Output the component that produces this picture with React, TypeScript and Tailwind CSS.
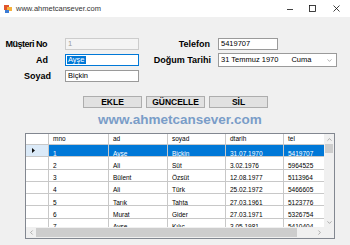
import { ChevronDown, ChevronLeft, ChevronRight, ChevronUp } from "lucide-react";

const rows = [
  { mno: "1", ad: "Ayşe", soyad: "Biçkin", dtarih: "31.07.1970", tel: "5419707" },
  { mno: "2", ad: "Ali", soyad: "Süt", dtarih: "3.02.1976", tel: "5964525" },
  { mno: "3", ad: "Bülent", soyad: "Özsüt", dtarih: "12.08.1977", tel: "5113964" },
  { mno: "4", ad: "Ali", soyad: "Türk", dtarih: "25.02.1972", tel: "5466605" },
  { mno: "5", ad: "Tarık", soyad: "Tahta", dtarih: "27.03.1961", tel: "5123776" },
  { mno: "6", ad: "Murat", soyad: "Gider", dtarih: "27.03.1971", tel: "5326754" },
  { mno: "7", ad: "Ayşe", soyad: "Kılıç", dtarih: "3.05.1981", tel: "5410404" },
];

const cols = ["mno", "ad", "soyad", "dtarih", "tel"] as const;

function AppIcon() {
  return (
    <svg width="8" height="8" viewBox="0 0 8 8">
      <rect x="0" y="0" width="5" height="5" fill="#e0542c" />
      <rect x="3" y="2" width="5" height="4" fill="#f6b23c" />
      <rect x="1" y="5" width="4" height="3" fill="#3b7bd4" />
    </svg>
  );
}

function Label({ w, text, tight }: { w: string; text: string; tight?: boolean }) {
  return (
    <div className={`${w} text-right font-bold text-[9px] leading-none text-black ${tight ? "tracking-[-0.5px]" : ""}`}>
      {text}
    </div>
  );
}

export default function App() {
  return (
    <div className="w-[350px] h-[245px] bg-[#f0f0f0] overflow-hidden flex flex-col font-['Liberation_Sans',Arial,sans-serif]">
      {/* title bar */}
      <div className="h-[17px] bg-white flex items-center pl-[4px] shrink-0">
        <AppIcon />
        <span className="ml-[4px] text-[7.5px] text-[#333] leading-none">www.ahmetcansever.com</span>
        <div className="ml-auto flex h-full">
          <div className="w-[22px] flex items-center justify-center">
            <svg width="6" height="6" viewBox="0 0 6 6">
              <line x1="0" y1="3.5" x2="6" y2="3.5" stroke="#111" strokeWidth="0.8" />
            </svg>
          </div>
          <div className="w-[22px] flex items-center justify-center">
            <svg width="7" height="7" viewBox="0 0 7 7">
              <rect x="0.5" y="0.5" width="6" height="6" fill="none" stroke="#111" strokeWidth="0.8" />
            </svg>
          </div>
          <div className="w-[27px] flex items-center justify-center">
            <svg width="7" height="7" viewBox="0 0 7 7">
              <path d="M0.5 0.5 L6.5 6.5 M6.5 0.5 L0.5 6.5" stroke="#111" strokeWidth="0.8" />
            </svg>
          </div>
        </div>
      </div>

      {/* form fields */}
      <div className="mt-[19px] flex flex-col">
        <div className="h-[16px] flex items-center">
          <Label w="w-[47px]" text="Müşteri No" tight />
          <div className="ml-[18px] w-[74px] h-[12px] border border-[#cccccc] bg-[#f4f4f4] flex items-center pl-[2px] text-[7.5px] text-[#9a9a9a]">
            1
          </div>
          <Label w="w-[71px]" text="Telefon" />
          <div className="ml-[8px] w-[60px] h-[12px] border border-[#9a9a9a] bg-white flex items-center pl-[2px] text-[7.5px] text-black">
            5419707
          </div>
        </div>
        <div className="h-[16px] flex items-center">
          <Label w="w-[48px]" text="Ad" />
          <div className="ml-[17px] w-[74px] h-[12px] border border-[#0078d7] bg-white flex items-center pl-[1px] text-[7.5px]">
            <span className="bg-[#0078d7] text-white px-[1px] leading-[8px]">Ayşe</span>
          </div>
          <Label w="w-[72px]" text="Doğum Tarihi" />
          <div className="ml-[7px] w-[119px] h-[14px] border border-[#9a9a9a] bg-white flex items-center pl-[2px] text-[7.5px] text-black">
            <span>31 Temmuz 1970</span>
            <span className="ml-[13px]">Cuma</span>
            <div className="ml-auto w-[14px] flex items-center justify-center">
              <ChevronDown size={7} strokeWidth={1.5} color="#555" />
            </div>
          </div>
        </div>
        <div className="h-[16px] flex items-center">
          <Label w="w-[51px]" text="Soyad" />
          <div className="ml-[14px] w-[74px] h-[12px] border border-[#9a9a9a] bg-white flex items-center pl-[2px] text-[7.5px] text-black">
            Biçkin
          </div>
        </div>
      </div>

      {/* buttons */}
      <div className="mt-[12px] pl-[83px] flex gap-[4px]">
        {["EKLE", "GÜNCELLE", "SİL"].map((b) => (
          <button
            key={b}
            className="w-[59px] h-[12px] bg-[#e1e1e1] border border-[#adadad] flex items-center justify-center text-[8.5px] font-bold leading-none text-black"
          >
            {b}
          </button>
        ))}
      </div>

      <div className="mt-[4px] pl-[98px] h-[16px] text-[13.5px] leading-[16px] font-bold text-[#7a9dc8]">
        www.ahmetcansever.com
      </div>

      {/* data grid */}
      <div className="mt-[5px] ml-[25px] w-[310px] h-[106px] border border-[#828790] bg-white flex flex-col">
        <div className="flex h-[93px]">
          <div className="w-[298px] overflow-hidden">
            <div className="grid grid-cols-[23px_60px_59px_58px_58px_60px] grid-rows-[11px_repeat(7,12.25px)] w-[318px] text-[6.5px] leading-none">
              <div className="border-r border-b border-[#c8c8c8] bg-white" />
              {cols.map((c) => (
                <div key={c} className="border-r border-b border-[#c8c8c8] bg-white flex items-center pl-[4px] text-black">
                  {c}
                </div>
              ))}
              {rows.map((r, i) => {
                const sel = i === 0;
                return [
                  <div
                    key={`h${i}`}
                    className={`border-r border-b border-[#c8c8c8] flex items-center pl-[6px] ${sel ? "bg-[#dbeaf8]" : "bg-white"}`}
                  >
                    {sel && (
                      <svg width="3" height="5" viewBox="0 0 3 5">
                        <path d="M0 0 L3 2.5 L0 5 Z" fill="#111" />
                      </svg>
                    )}
                  </div>,
                  ...cols.map((c) => (
                    <div
                      key={`${i}${c}`}
                      className={`border-r border-b border-[#c8c8c8] pl-[4px] pt-[5.5px] ${sel ? "bg-[#0078d7] text-white" : "bg-white text-black"}`}
                    >
                      {r[c]}
                    </div>
                  )),
                ];
              })}
            </div>
          </div>
          {/* vertical scrollbar */}
          <div className="w-[10px] bg-[#f0f0f0] flex flex-col">
            <div className="h-[10px] flex items-center justify-center">
              <ChevronUp size={7} strokeWidth={1.6} color="#606060" />
            </div>
            <div className="h-[9px] mx-[1px] bg-[#cdcdcd]" />
            <div className="flex-1" />
            <div className="h-[10px] flex items-center justify-center">
              <ChevronDown size={7} strokeWidth={1.6} color="#606060" />
            </div>
          </div>
        </div>
        {/* horizontal scrollbar */}
        <div className="flex h-[11px]">
          <div className="w-[298px] bg-[#f0f0f0] flex">
            <div className="w-[10px] flex items-center justify-center">
              <ChevronLeft size={7} strokeWidth={1.6} color="#606060" />
            </div>
            <div className="w-[261px] my-[1px] bg-[#cdcdcd]" />
            <div className="flex-1" />
            <div className="w-[10px] flex items-center justify-center">
              <ChevronRight size={7} strokeWidth={1.6} color="#606060" />
            </div>
          </div>
          <div className="w-[10px] bg-[#f0f0f0]" />
        </div>
      </div>
    </div>
  );
}
